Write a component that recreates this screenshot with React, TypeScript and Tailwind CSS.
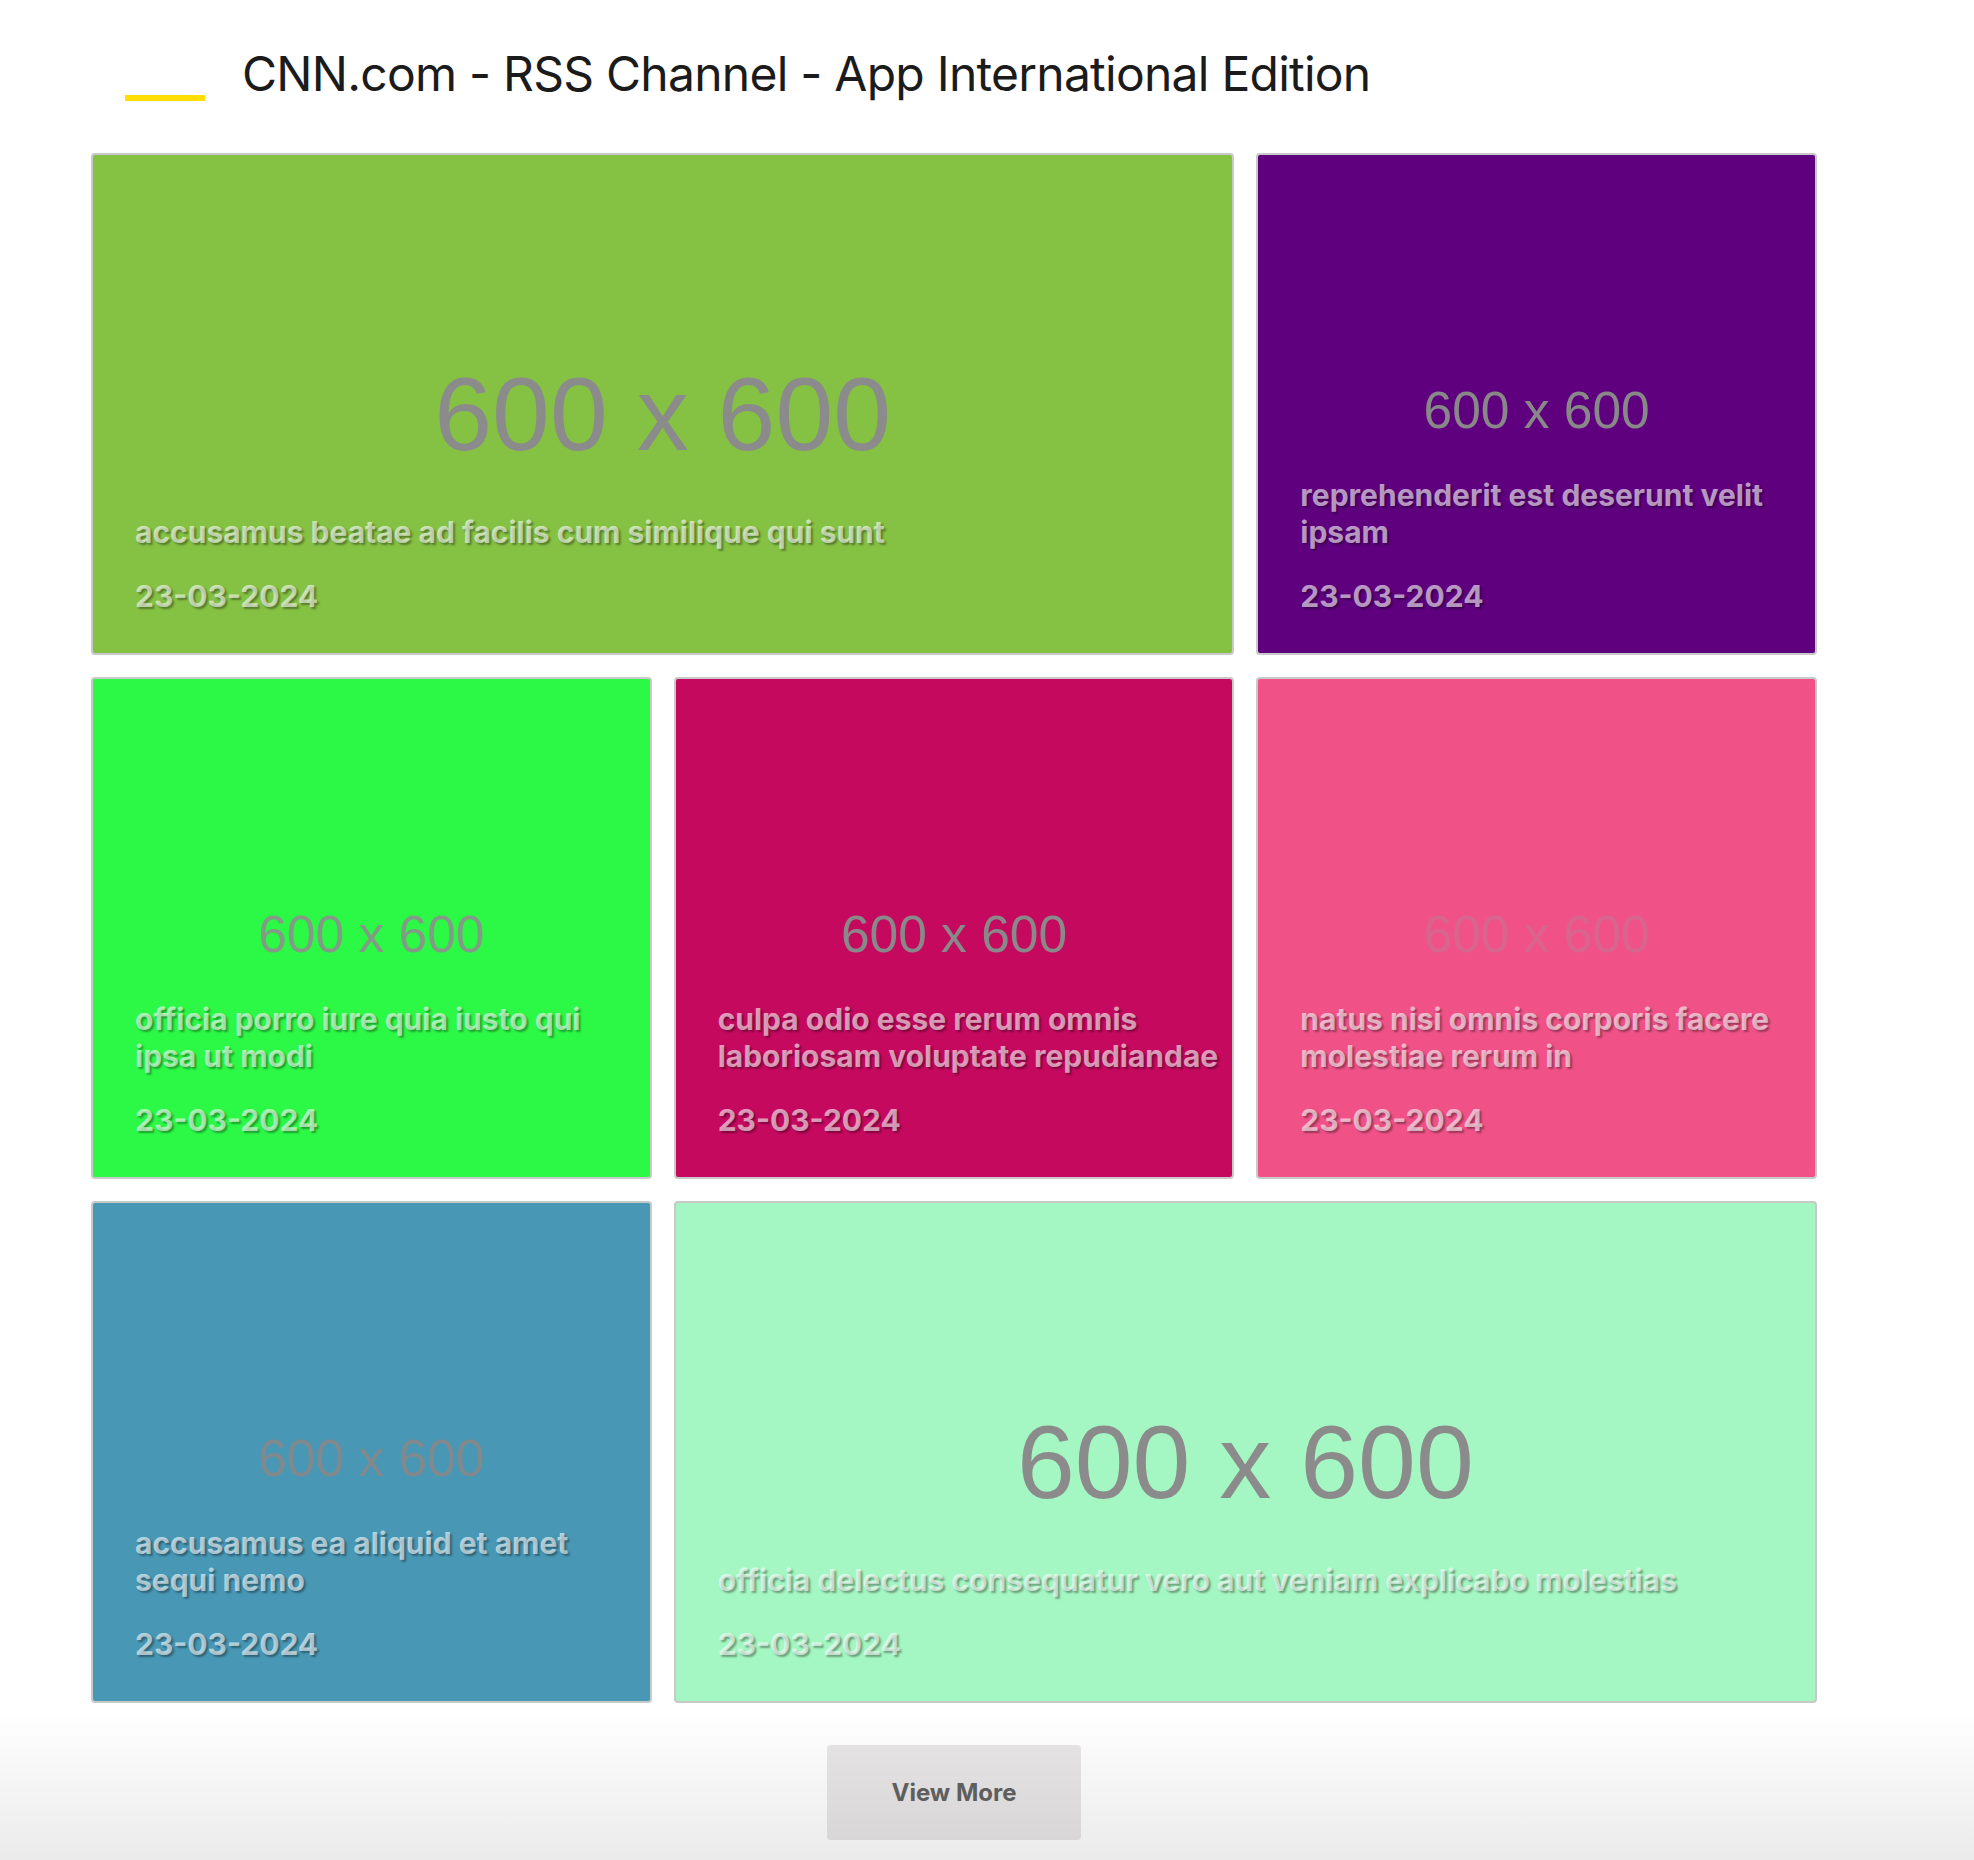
import React from 'react';

interface FeedItem {
    title: string;
    date: string;
    bg: string;
    ph: string;
    wide?: boolean;
}

const items: FeedItem[] = [
    { title: 'accusamus beatae ad facilis cum similique qui sunt', date: '23-03-2024', bg: 'bg-[#85c143]', ph: 'text-[#8b8b8b]', wide: true },
    { title: 'reprehenderit est deserunt velit ipsam', date: '23-03-2024', bg: 'bg-[#5f007f]', ph: 'text-[#888888]' },
    { title: 'officia porro iure quia iusto qui ipsa ut modi', date: '23-03-2024', bg: 'bg-[#2cf946]', ph: 'text-[#839a86]' },
    { title: 'culpa odio esse rerum omnis laboriosam voluptate repudiandae', date: '23-03-2024', bg: 'bg-[#c5095f]', ph: 'text-[#898989]' },
    { title: 'natus nisi omnis corporis facere molestiae rerum in', date: '23-03-2024', bg: 'bg-[#f05288]', ph: 'text-[#d8658e]' },
    { title: 'accusamus ea aliquid et amet sequi nemo', date: '23-03-2024', bg: 'bg-[#4797b5]', ph: 'text-[#80898d]' },
    { title: 'officia delectus consequatur vero aut veniam explicabo molestias', date: '23-03-2024', bg: 'bg-[#a4f7c2]', ph: 'text-[#8b8b8b]', wide: true },
];

const FeedCard: React.FC<{ item: FeedItem }> = ({ item }) => {
    return (
        <div className={`relative overflow-hidden rounded-[4px] border-2 border-[#c9c9c9] ${item.bg} ${item.wide ? 'col-span-2' : ''}`}>
            {/* placeholder image text */}
            <div
                className={`absolute inset-0 flex items-center justify-center font-['Liberation_Sans',Arial,sans-serif] leading-none ${item.ph} ${item.wide ? 'text-[104px] pt-[20px]' : 'text-[51.5px] pt-[13px]'}`}
            >
                600 x 600
            </div>
            <div className="relative flex h-full flex-col justify-end pl-[42px] pr-[12px] pb-[38px] font-bold text-white/60 [text-shadow:2px_2px_2px_rgba(0,0,0,0.35)]">
                <p className="text-[30px] leading-[37px]">{item.title}</p>
                <p className="mt-[27px] text-[30px] leading-[37px]">{item.date}</p>
            </div>
        </div>
    );
};

const App: React.FC = () => {
    return (
        <div className="relative min-h-[1860px] overflow-hidden bg-white font-['Inter','Noto_Sans',sans-serif]">
            <header className="flex items-start pl-[125px] pt-[50px]">
                <span className="mt-[45px] h-[6px] w-[80px] bg-[#ffde00]" />
                <h1 className="ml-[37px] text-[48px] font-normal leading-[48px] tracking-[-0.75px] text-[#1b1b1b]">
                    CNN.com - RSS Channel - App International Edition
                </h1>
            </header>

            <div className="ml-[91px] mt-[52px] grid w-[1726px] grid-cols-3 auto-rows-[502px] gap-[22px]">
                {items.map((item, i) => (
                    <FeedCard key={i} item={item} />
                ))}
            </div>

            <div className="ml-[91px] mt-[42px] flex w-[1726px] justify-center">
                <button className="h-[95px] w-[254px] rounded-[4px] bg-[#e8e6e6] text-[24px] font-bold text-[#626262]">
                    View More
                </button>
            </div>

            <div className="pointer-events-none absolute inset-x-0 bottom-0 h-[150px] bg-gradient-to-b from-black/0 to-black/[0.08]" />
        </div>
    );
};

export default App;
